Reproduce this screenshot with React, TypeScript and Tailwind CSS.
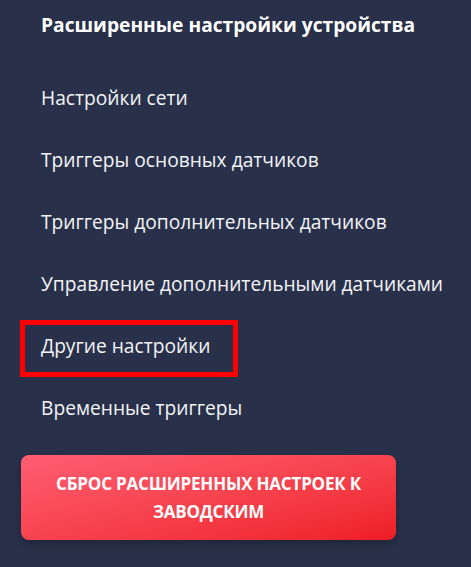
import React from 'react';

const items = [
  'Настройки сети',
  'Триггеры основных датчиков',
  'Триггеры дополнительных датчиков',
  'Управление дополнительными датчиками',
  'Другие настройки',
  'Временные триггеры',
];

export default function App() {
  return (
    <div
      className="min-h-[567px] w-full bg-[#29304a] pl-[20px] text-[#f3f4f6]"
      style={{ fontFamily: '"Open Sans", "Liberation Sans", sans-serif' }}
    >
      <div className="h-[72px] pl-[21px] pt-[12px]">
        <h2 className="text-[19.2px] font-bold leading-[26px] text-white">Расширенные настройки устройства</h2>
      </div>
      <nav className="flex flex-col gap-[5px]">
        {items.map((label) => (
          <div
            key={label}
            className={`flex h-[57px] w-fit items-center border-[5px] pl-[16px] pr-[23px] pb-[4px] text-[19.2px] ${
              label === 'Другие настройки' ? 'border-[#ff0000]' : 'border-transparent'
            }`}
          >
            {label}
          </div>
        ))}
      </nav>
      <button className="mt-[16px] ml-[1px] flex h-[85px] w-[375px] items-center justify-center rounded-[8px] bg-gradient-to-br from-[#ff5d72] to-[#ee1b24] px-[24px] text-center text-[17px] font-bold uppercase leading-[28px] tracking-[-0.2px] text-white shadow-[0_4px_10px_rgba(0,0,0,0.25)]">
        Сброс расширенных настроек к заводским
      </button>
    </div>
  );
}
